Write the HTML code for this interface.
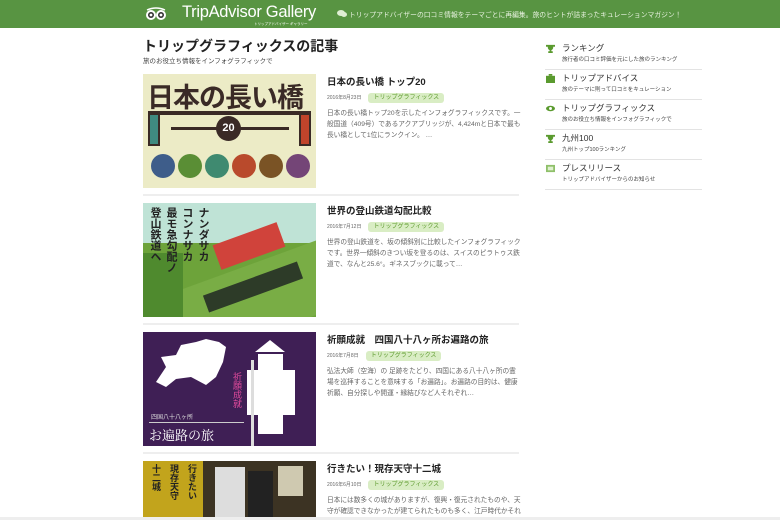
<!DOCTYPE html>
<html style="overflow:hidden;height:520px"><head><meta charset="utf-8"><style>
*{margin:0;padding:0;box-sizing:border-box}
body{width:780px;height:520px;overflow:hidden;background:#fff;font-family:"Liberation Sans","Noto Sans CJK JP",sans-serif;color:#333;position:relative}
.hd{position:absolute;left:0;top:0;width:780px;height:28px;background:#589442}
.logo{position:absolute;left:182px;top:3px;color:#fff;font-size:16.5px;letter-spacing:-0.3px}
.sub{position:absolute;left:254px;top:22px;color:#fff;font-size:3.5px}
.tag{position:absolute;left:349px;top:9px;color:#e8f2e0;font-size:6.8px;white-space:nowrap}
h1{position:absolute;left:143px;top:36px;font-size:14px;font-weight:bold;color:#222}
.lead{position:absolute;left:143px;top:55px;font-size:6.5px;color:#444}
.img{position:absolute;left:143px;width:173px;height:114px;overflow:hidden}
.art{position:absolute;left:327px;width:194px}
.art h2{font-size:9.5px;font-weight:bold;color:#222;margin-top:0}
.meta{margin-top:5px;font-size:5px;color:#666;height:10px;line-height:10px}
.meta span{display:inline-block;background:#d9edc4;color:#5d9a2d;font-size:6px;padding:0 5px;border-radius:3px;margin-left:7px;line-height:10px}
.art p{margin-top:5px;font-size:6.7px;line-height:11px;color:#666}
.sep{position:absolute;left:143px;width:376px;height:2px;background:#eee}
.sb{position:absolute;left:545px;width:157px;height:30px;border-bottom:1.5px solid #e3e3e3}
.sb .t{position:absolute;left:17px;top:2px;font-size:8.5px;color:#333}
.sb .d{position:absolute;left:17px;top:15px;font-size:5.5px;color:#444}
.ic{position:absolute;left:1px;top:4px;width:9px;height:9px}
</style></head><body>
<div class="hd">
<svg style="position:absolute;left:145px;top:6px" width="22" height="16" viewBox="0 0 22 16"><circle cx="6" cy="9" r="5" fill="#fff"/><circle cx="16" cy="9" r="5" fill="#fff"/><circle cx="6" cy="9" r="3" fill="#333"/><circle cx="16" cy="9" r="3" fill="#333"/><circle cx="6" cy="9" r="1.4" fill="#fff"/><circle cx="16" cy="9" r="1.4" fill="#fff"/><path d="M2 4Q11 0 20 4" stroke="#fff" stroke-width="1.5" fill="none"/></svg>
<div class="logo">TripAdvisor Gallery</div>
<div class="sub">トリップアドバイザー ギャラリー</div>
<svg style="position:absolute;left:337px;top:9px" width="10" height="9" viewBox="0 0 10 9"><ellipse cx="4" cy="4" rx="4" ry="3" fill="#dfeed3"/><ellipse cx="7" cy="5.5" rx="3" ry="2.5" fill="#dfeed3"/></svg>
<div class="tag">トリップアドバイザーの口コミ情報をテーマごとに再編集。旅のヒントが詰まったキュレーションマガジン！</div>
</div>
<h1>トリップグラフィックスの記事</h1>
<div class="lead">旅のお役立ち情報をインフォグラフィックで</div>

<div class="img" style="top:74px;background:#ecebc6">
<div style="position:absolute;left:4px;top:2px;font-size:27px;font-weight:bold;color:#3a2a26;letter-spacing:-1px">日本の長い橋</div>
<div style="position:absolute;left:5px;top:37px;width:163px;height:4px;background:#3a2a26"></div>
<div style="position:absolute;left:5px;top:37px;width:12px;height:35px;background:#3a2a26"></div><div style="position:absolute;left:7px;top:41px;width:8px;height:29px;background:#3f8a80"></div>
<div style="position:absolute;left:156px;top:37px;width:12px;height:35px;background:#3a2a26"></div><div style="position:absolute;left:158px;top:41px;width:8px;height:29px;background:#c0442b"></div>
<div style="position:absolute;left:28px;top:53px;width:118px;height:3px;background:#3a2a26"></div>
<div style="position:absolute;left:73px;top:42px;width:25px;height:25px;border-radius:50%;background:#3a2a26;color:#fff;font-size:11px;font-weight:bold;text-align:center;line-height:25px">20</div>
<div style="position:absolute;left:8px;top:80px;width:24px;height:24px;border-radius:50%;background:#3e5d8a"></div>
<div style="position:absolute;left:35px;top:80px;width:24px;height:24px;border-radius:50%;background:#5a8e35"></div>
<div style="position:absolute;left:62px;top:80px;width:24px;height:24px;border-radius:50%;background:#3f8a70"></div>
<div style="position:absolute;left:89px;top:80px;width:24px;height:24px;border-radius:50%;background:#b94a2c"></div>
<div style="position:absolute;left:116px;top:80px;width:24px;height:24px;border-radius:50%;background:#7a5325"></div>
<div style="position:absolute;left:143px;top:80px;width:24px;height:24px;border-radius:50%;background:#744577"></div>
</div>
<div class="art" style="top:74px"><h2>日本の長い橋 トップ20</h2><div class="meta">2016年8月23日<span>トリップグラフィックス</span></div><p>日本の長い橋トップ20を示したインフォグラフィックスです。一般国道（409号）であるアクアブリッジが、4,424mと日本で最も長い橋として1位にランクイン。 …</p></div>
<div class="sep" style="top:194px"></div>

<div class="img" style="top:203px;background:#bfe3d6">
<div style="position:absolute;left:0;top:40px;width:173px;height:74px;background:#6da33a"></div>
<div style="position:absolute;left:-20px;top:70px;width:220px;height:70px;background:#79ad45;transform:rotate(-20deg)"></div>
<div style="position:absolute;left:72px;top:30px;width:68px;height:26px;background:#d0433b;transform:rotate(-20deg)"></div>
<div style="position:absolute;left:60px;top:75px;width:100px;height:18px;background:#2d3b28;transform:rotate(-20deg)"></div>
<div style="position:absolute;left:0;top:50px;width:40px;height:64px;background:#4f8a2e"></div>
<div style="position:absolute;left:4px;top:4px;height:75px;font-size:11px;font-weight:bold;color:#222;writing-mode:vertical-rl;line-height:16px">ナンダサカ<br>コンナサカ<br>最モ急勾配ノ<br>登山鉄道ヘ</div>
</div>
<div class="art" style="top:203px"><h2>世界の登山鉄道勾配比較</h2><div class="meta">2016年7月12日<span>トリップグラフィックス</span></div><p>世界の登山鉄道を、坂の傾斜別に比較したインフォグラフィックです。世界一傾斜のきつい坂を登るのは、スイスのピラトゥス鉄道で、なんと25.6°。ギネスブックに載って…</p></div>
<div class="sep" style="top:323px"></div>

<div class="img" style="top:332px;background:#3f1f55">
<svg style="position:absolute;left:8px;top:5px" width="75" height="55" viewBox="0 0 75 55"><path d="M5 45L15 30 10 20 25 18 30 8 45 5 55 2 68 5 75 10 72 25 65 40 55 48 40 40 25 42 15 50Z" fill="#fff"/></svg>
<div style="position:absolute;left:112px;top:8px;width:30px;height:12px;background:#fff;clip-path:polygon(50% 0,100% 100%,0 100%)"></div>
<div style="position:absolute;left:115px;top:22px;width:25px;height:80px;background:#fff"></div>
<div style="position:absolute;left:104px;top:38px;width:48px;height:45px;background:#fff"></div>
<div style="position:absolute;left:108px;top:28px;width:3px;height:86px;background:#ddd"></div>
<div style="position:absolute;left:88px;top:40px;font-size:9px;color:#e04a9c;writing-mode:vertical-rl">祈願成就</div>
<div style="position:absolute;left:8px;top:80px;font-size:6px;color:#ddd">四国八十八ヶ所</div>
<div style="position:absolute;left:6px;top:90px;width:95px;height:1px;background:#ccc"></div>
<div style="position:absolute;left:6px;top:93px;font-size:13px;color:#fff;font-family:'Noto Serif CJK SC',serif">お遍路の旅</div>
</div>
<div class="art" style="top:332px"><h2>祈願成就　四国八十八ヶ所お遍路の旅</h2><div class="meta">2016年7月8日<span>トリップグラフィックス</span></div><p>弘法大師（空海）の 足跡をたどり、四国にある八十八ヶ所の霊場を巡拝することを意味する「お遍路」。お遍路の目的は、健康祈願、自分探しや開運・縁結びなど人それぞれ…</p></div>
<div class="sep" style="top:452px"></div>

<div class="img" style="top:461px;background:#c2a41c;height:59px">
<div style="position:absolute;left:60px;top:0;width:113px;height:59px;background:#3c3323"></div>
<div style="position:absolute;left:72px;top:6px;width:30px;height:50px;background:#ddd"></div>
<div style="position:absolute;left:105px;top:10px;width:25px;height:49px;background:#222"></div>
<div style="position:absolute;left:135px;top:5px;width:25px;height:30px;background:#cfc9b0"></div>
<div style="position:absolute;left:4px;top:3px;height:55px;font-size:9px;font-weight:bold;color:#222;writing-mode:vertical-rl;line-height:18px">行きたい<br>現存天守<br>十二城</div>
</div>
<div class="art" style="top:461px;height:59px;overflow:hidden"><h2>行きたい！現存天守十二城</h2><div class="meta">2016年6月10日<span>トリップグラフィックス</span></div><p>日本には数多くの城がありますが、復興・復元されたものや、天守が確認できなかったが建てられたものも多く、江戸時代かそれ以前に築城され現在までに保存されている現存天…</p></div>
<div style="position:absolute;left:0;top:517px;width:780px;height:3px;background:#eee"></div>

<div class="sb" style="top:40px"><svg class="ic" viewBox="0 0 10 10"><path d="M2 1h6v3a3 3 0 0 1-6 0z M0 1h2v2H0z M8 1h2v2H8z M4 6h2v2H4z M2.5 8h5v2h-5z" fill="#5a9a2e"/></svg><div class="t">ランキング</div><div class="d">旅行者の口コミ評価を元にした旅のランキング</div></div>
<div class="sb" style="top:70px"><svg class="ic" viewBox="0 0 10 10"><rect x="0" y="2" width="10" height="8" fill="#5a9a2e"/><rect x="3" y="0" width="4" height="2" fill="#5a9a2e"/></svg><div class="t">トリップアドバイス</div><div class="d">旅のテーマに則って口コミをキュレーション</div></div>
<div class="sb" style="top:100px"><svg class="ic" viewBox="0 0 10 10"><ellipse cx="5" cy="5" rx="5" ry="3" fill="#5a9a2e"/><circle cx="5" cy="5" r="1.6" fill="#fff"/></svg><div class="t">トリップグラフィックス</div><div class="d">旅のお役立ち情報をインフォグラフィックで</div></div>
<div class="sb" style="top:130px"><svg class="ic" viewBox="0 0 10 10"><path d="M2 1h6v3a3 3 0 0 1-6 0z M0 1h2v2H0z M8 1h2v2H8z M4 6h2v2H4z M2.5 8h5v2h-5z" fill="#5a9a2e"/></svg><div class="t">九州100</div><div class="d">九州トップ100ランキング</div></div>
<div class="sb" style="top:160px"><svg class="ic" viewBox="0 0 10 10"><rect x="0" y="1" width="10" height="8" fill="#8fc06a"/><rect x="2" y="3" width="6" height="4" fill="#dff0cf"/></svg><div class="t">プレスリリース</div><div class="d">トリップアドバイザーからのお知らせ</div></div>
</body></html>
